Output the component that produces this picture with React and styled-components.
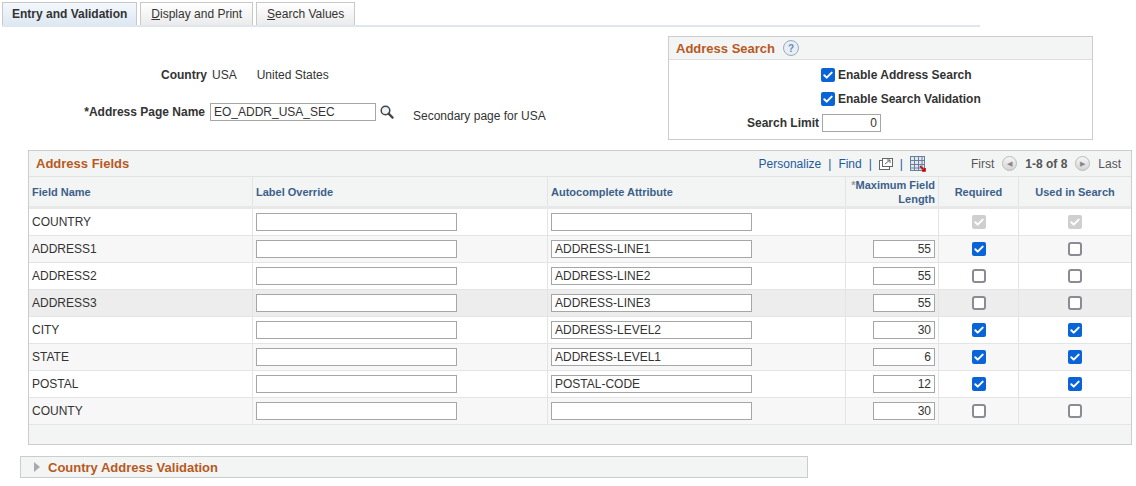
import React from "react";
import styled, { createGlobalStyle } from "styled-components";

const G = createGlobalStyle`
  body{margin:0;font-family:"Liberation Sans",Arial,sans-serif;font-size:12px;color:#333;background:#fff;}
`;
const Page = styled.div`width:1136px;height:486px;position:relative;overflow:hidden;`;
const Tabs = styled.div`display:flex;gap:3px;margin:2px 0 0 2px;width:978px;border-bottom:2px solid #dfe6ee;height:23px;`;
const Tab = styled.div`
  height:22px;padding:0 ${p=>p.$active?9:10}px;display:flex;align-items:center;font-size:12px;
  border:1px solid #c8c8c8;border-bottom:none;
  background:${p=>p.$active?"linear-gradient(#f4f8fc,#dde8f3)":"linear-gradient(#fff,#ebebeb)"};
  font-weight:${p=>p.$active?"bold":"normal"};color:#333;
  u{text-decoration:underline;}
`;
const Top = styled.div`display:flex;height:114px;`;
const Left = styled.div`width:668px;padding-top:37px;box-sizing:border-box;`;
const FRow = styled.div`display:flex;align-items:center;height:22px;margin-bottom:15px;`;
const Lbl = styled.div`width:${p=>p.$w}px;text-align:right;font-weight:bold;padding-right:5px;box-sizing:border-box;`;
const Val = styled.span`margin-right:${p=>p.$mr||0}px;`;
const Input = styled.div`
  width:${p=>p.$w}px;height:18px;border:1px solid #a6a6a6;background:#fff;box-sizing:border-box;
  padding:0 3px;display:flex;align-items:center;justify-content:${p=>p.$right?"flex-end":"flex-start"};
  font-size:12px;color:#333;font-weight:normal;
`;
const SearchBox = styled.div`margin-top:9px;width:425px;height:104px;border:1px solid #ccc;box-sizing:border-box;`;
const BoxHead = styled.div`height:22px;background:#f3f5f5;border-bottom:1px solid #ddd;display:flex;align-items:center;padding-left:7px;gap:8px;
  color:#b8591e;font-weight:bold;font-size:13px;`;
const Help = styled.span`width:14px;height:14px;border-radius:50%;border:1px solid #9ab;background:#e8eef5;color:#6b8bb0;font-size:10px;display:inline-flex;align-items:center;justify-content:center;`;
const CkRow = styled.div`display:flex;align-items:center;gap:3px;height:24px;padding-left:${p=>p.$pl}px;font-weight:bold;`;
const Check = ({on,dis}) => (
  <svg width="14" height="14" viewBox="0 0 14 14">
    {on ? <rect x="0" y="0" width="14" height="14" rx="2" fill={dis?"#cfcfd2":"#0a64d8"} />
        : <rect x="1" y="1" width="12" height="12" rx="2" fill="#fff" stroke="#8b8b95" strokeWidth="2" />}
    {on && <path d="M3.3 7.2l2.4 2.4 5-5" fill="none" stroke="#fff" strokeWidth="2" strokeLinecap="round" strokeLinejoin="round"/>}
  </svg>
);
const Grid = styled.div`margin:9px 0 0 28px;width:1104px;border:1px solid #ccc;box-sizing:border-box;`;
const GridHead = styled.div`height:25px;background:#f3f5f5;border-bottom:1px solid #e2e2e2;display:flex;align-items:center;padding:0 10px 0 7px;`;
const GTitle = styled.div`color:#b8591e;font-weight:bold;font-size:13px;flex:1;`;
const Nav = styled.div`display:flex;align-items:center;gap:5px;color:#1e5a9a;font-size:12px;`;
const Sep = styled.span`color:#1e5a9a;margin:0 2px;`;
const Grey = styled.span`color:#555;`;
const Circ = styled.span`width:13px;height:13px;border-radius:50%;background:linear-gradient(#f5f5f5,#d5d5d5);border:1px solid #bbb;display:inline-flex;align-items:center;justify-content:center;font-size:7px;color:#888;margin:0 3px;`;
const cols = "224px 295px 298px 93px 80px 1fr";
const Row = styled.div`display:grid;grid-template-columns:${cols};height:${p=>p.$h||27}px;
  background:${p=>p.$bg||"#fff"};border-bottom:${p=>p.$thick?"3px solid #e8e8e8":"1px solid #e4e4e4"};box-sizing:border-box;`;
const Cell = styled.div`border-right:1px solid #e4e4e4;display:flex;align-items:center;padding:0 3px;
  justify-content:${p=>p.$j||"flex-start"};font-size:12px;&:last-child{border-right:none;}`;
const HCell = styled(Cell)`color:#3c5f8a;font-weight:bold;font-size:11px;text-align:${p=>p.$ta||"left"};line-height:14px;`;
const Footer = styled.div`height:19px;background:#f3f5f5;`;
const Collapse = styled.div`margin:11px 0 0 20px;width:788px;height:22px;border:1px solid #ccc;background:#f3f5f5;box-sizing:border-box;
  display:flex;align-items:center;gap:8px;padding-left:13px;color:#b8591e;font-weight:bold;font-size:13px;`;

const rows = [
  ["COUNTRY","","",null,"d","d"],
  ["ADDRESS1","ADDRESS-LINE1","55",1,1,0],
  ["ADDRESS2","ADDRESS-LINE2","55",0,0,0],
  ["ADDRESS3","ADDRESS-LINE3","55",0,0,0],
  ["CITY","ADDRESS-LEVEL2","30",1,1,1],
  ["STATE","ADDRESS-LEVEL1","6",1,1,1],
  ["POSTAL","POSTAL-CODE","12",1,1,1],
  ["COUNTY","","30",0,0,0],
];
const bgs = ["#fff","#f7f7f7","#fff","#ededed","#fff","#f7f7f7","#fff","#f7f7f7"];

export default function App(){
  return <Page><G/>
    <Tabs>
      <Tab $active>Entry and Validation</Tab>
      <Tab><span><u>D</u>isplay and Print</span></Tab>
      <Tab><span><u>S</u>earch Values</span></Tab>
    </Tabs>
    <Top>
      <Left>
        <FRow><Lbl $w={212}>Country</Lbl><Val $mr={20}>USA</Val><Val>United States</Val></FRow>
        <FRow><Lbl $w={210}>*Address Page Name</Lbl><Input $w={166}>EO_ADDR_USA_SEC</Input>
          <svg width="16" height="16" viewBox="0 0 16 16" style={{margin:"0 18px 0 3px"}}><circle cx="6.5" cy="6.5" r="4.3" fill="#eef4fb" stroke="#444" strokeWidth="1.5"/><path d="M9.6 9.6l4 4" stroke="#444" strokeWidth="2.2" strokeLinecap="round"/></svg>
          <span style={{marginTop:8}}>Secondary page for USA</span></FRow>
      </Left>
      <SearchBox>
        <BoxHead>Address Search<Help>?</Help></BoxHead>
        <CkRow $pl={152} style={{marginTop:3}}><Check on/>Enable Address Search</CkRow>
        <CkRow $pl={152}><Check on/>Enable Search Validation</CkRow>
        <CkRow $pl={78}>Search Limit<Input $w={59} $right style={{marginLeft:0}}>0</Input></CkRow>
      </SearchBox>
    </Top>
    <Grid>
      <GridHead><GTitle>Address Fields</GTitle>
        <Nav>Personalize<Sep>|</Sep>Find<Sep>|</Sep>
          <svg width="14" height="12" viewBox="0 0 14 12"><rect x="0.5" y="2.5" width="10" height="9" fill="#fff" stroke="#666"/><rect x="3.5" y="0.5" width="10" height="8" fill="#fff" stroke="#666"/><path d="M6 6l5-4M8 2h3v3" stroke="#666" fill="none"/></svg>
          <Sep>|</Sep>
          <svg width="16" height="16" viewBox="0 0 16 16"><rect x="0.5" y="0.5" width="14" height="14" fill="#dfe8f2" stroke="#6a7f98"/><path d="M0.5 4.5h14M0.5 8.5h14M0.5 12h14M4.5 0.5v14M8.5 0.5v14M12 0.5v14" stroke="#6a7f98"/><path d="M10 10l5 5M12 15h3v-3" stroke="#c00" strokeWidth="1.6" fill="none"/></svg>
          <Grey style={{marginLeft:40}}>First</Grey><Circ>◀</Circ><Grey style={{fontWeight:"bold"}}>1-8 of 8</Grey><Circ>▶</Circ><Grey>Last</Grey>
        </Nav>
      </GridHead>
      <Row $h={32} $thick $bg="#f3f5f5">
        <HCell>Field Name</HCell><HCell>Label Override</HCell><HCell>Autocomplete Attribute</HCell>
        <HCell $j="flex-end" $ta="right"><span><span style={{color:"#999"}}>*</span>Maximum Field Length</span></HCell>
        <HCell $j="center">Required</HCell><HCell $j="center">Used in Search</HCell>
      </Row>
      {rows.map((r,i)=>(
        <Row key={r[0]} $bg={bgs[i]}>
          <Cell>{r[0]}</Cell>
          <Cell><Input $w={201}/></Cell>
          <Cell><Input $w={201}>{r[1]}</Input></Cell>
          <Cell $j="flex-end">{r[3]!==null && <Input $w={62} $right>{r[2]}</Input>}</Cell>
          <Cell $j="center"><Check on={!!r[4]} dis={r[4]==="d"}/></Cell>
          <Cell $j="center"><Check on={!!r[5]} dis={r[5]==="d"}/></Cell>
        </Row>
      ))}
      <Footer/>
    </Grid>
    <Collapse><svg width="6" height="10" viewBox="0 0 6 10"><path d="M0 0l6 5-6 5z" fill="#aaa"/></svg>Country Address Validation</Collapse>
  </Page>;
}
